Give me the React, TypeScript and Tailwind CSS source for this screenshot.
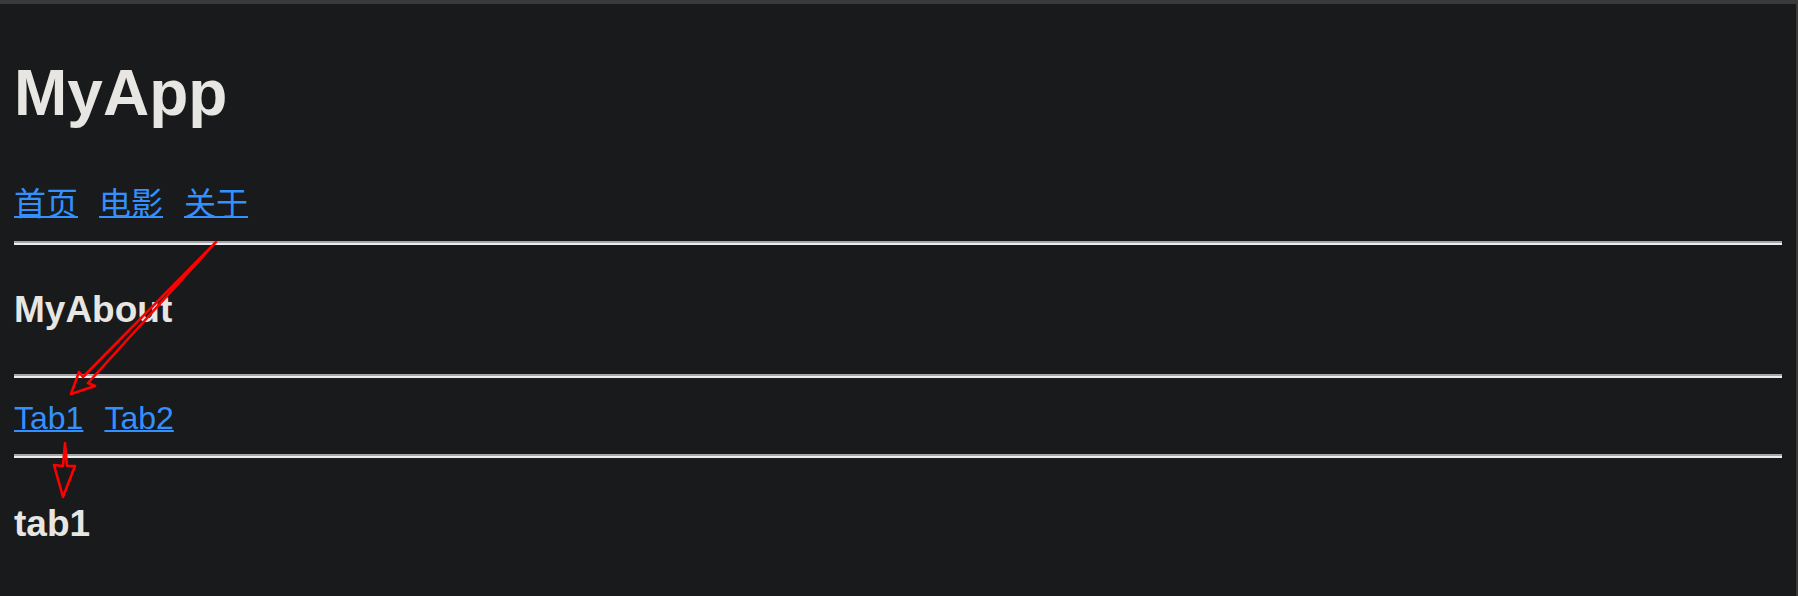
import React from "react";

const sans = "font-['Liberation_Sans','Noto_Sans_CJK_SC',sans-serif]";
const rule = "h-[4px] border-t-2 border-b-2 border-t-[#a6a6a6] border-b-[#ececec]";

function Annotations() {
  // red hand-drawn arrows laid over the page
  return (
    <svg
      className="pointer-events-none absolute left-0 top-0"
      width="1798"
      height="596"
      viewBox="0 0 1798 596"
      fill="none"
      stroke="#ff0000"
      strokeWidth="2.6"
      strokeLinejoin="round"
    >
      <polygon points="216,238 83,373 79,368 71,390 95,382 88,379" />
      <polygon points="65,439 63,462 54,461 63,493 75,462 67,462" />
    </svg>
  );
}

export default function App() {
  const links = ["首页", "电影", "关于"];
  const tabs = ["Tab1", "Tab2"];

  return (
    <div className={`relative h-[596px] overflow-hidden border-t-4 border-r-2 border-[#3a3a3a] bg-[#181a1b] text-[#e8e6e3] ${sans}`}>
      <div className="flex flex-col px-[14px]">
        <h1 className="mt-[57px] text-[64px] font-bold leading-[64px]">MyApp</h1>

        <nav className="mt-[63px] flex gap-[21px] text-[32px] leading-[32px]">
          {links.map((l) => (
            <a key={l} href="#" className="text-[#3391ff] underline decoration-2">
              {l}
            </a>
          ))}
        </nav>

        <div className={`mt-[21px] ${rule}`} />

        <h3 className="mt-[46px] text-[37px] font-bold leading-[37px]">MyAbout</h3>

        <div className={`mt-[46px] ${rule}`} />

        <div className="mt-[24px] flex gap-[21px] text-[32px] leading-[32px]">
          {tabs.map((t) => (
            <a key={t} href="#" className="text-[#3391ff] underline decoration-2">
              {t}
            </a>
          ))}
        </div>

        <div className={`mt-[20px] ${rule}`} />

        <h3 className="mt-[47px] text-[37px] font-bold leading-[37px]">tab1</h3>
      </div>
      <Annotations />
    </div>
  );
}
